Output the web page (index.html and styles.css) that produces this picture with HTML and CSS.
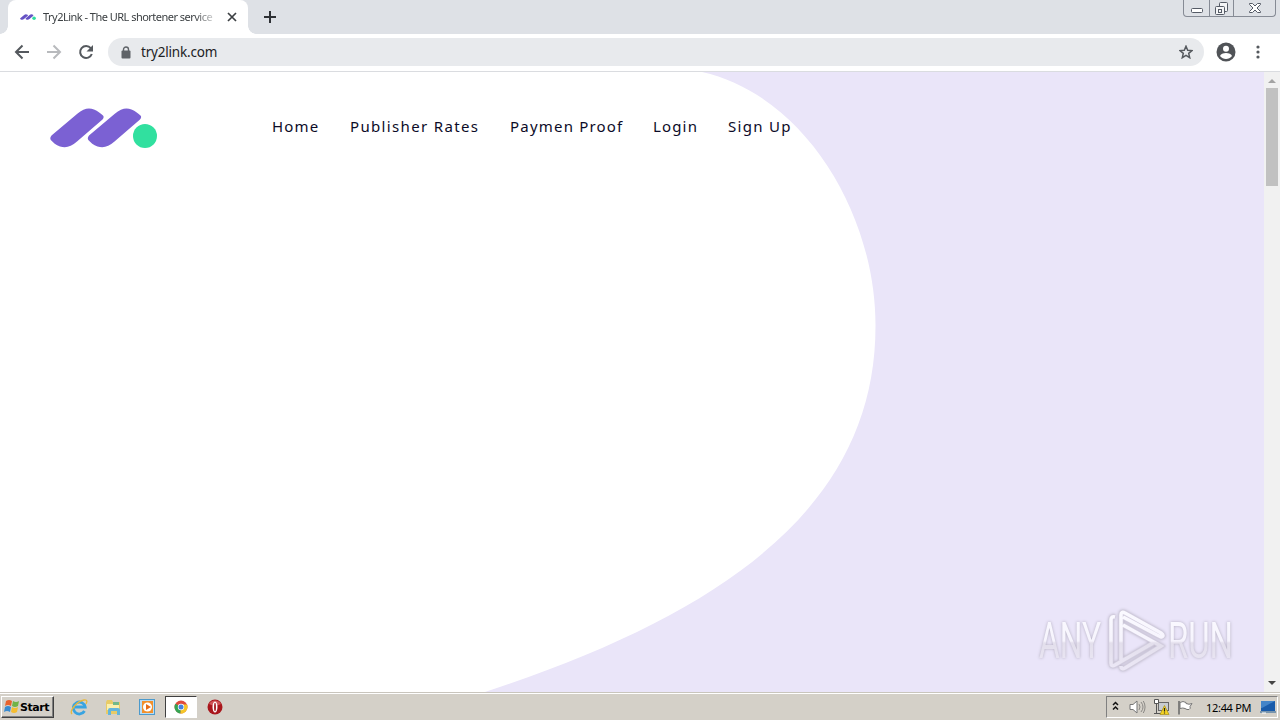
FILE: index.html
```html
<!DOCTYPE html>
<html lang="en">
<head>
  <meta charset="UTF-8">
  <title>Try2Link - The URL shortener service</title>
  <link rel="stylesheet" href="styles.css">
</head>
<body>

  <!-- Tab strip -->
  <div class="tabs">
    <div class="tab">
      <svg class="favicon" width="16" height="8" viewBox="0 0 108 40">
        <path fill="#6552c4" d="M2 29 28 6Q39-4 51 5q5 4 0 9L27 34Q16 43 3 35q-4-3-1-6z"/>
        <path fill="#6552c4" d="M39 29 65 6Q76-4 88 5q5 4 0 9L64 34Q53 43 40 35q-4-3-1-6z"/>
        <circle fill="#2fdca0" cx="95" cy="28" r="12"/>
      </svg>
      <span class="tab-title">Try2Link - The URL shortener service</span>
      <svg class="tab-close" width="10" height="10" viewBox="0 0 10 10"><path d="M1 1l8 8M9 1L1 9" stroke="#3c4043" stroke-width="1.7"/></svg>
    </div>
    <svg class="new-tab" width="12" height="12" viewBox="0 0 12 12"><path d="M6 0v12M0 6h12" stroke="#2e3135" stroke-width="2"/></svg>
    <div class="window-buttons">
      <span class="win-min"><svg width="12" height="5" viewBox="0 0 12 5"><rect x=".5" y=".5" width="11" height="4" rx="1" fill="#fff" stroke="#555b66"/></svg></span>
      <span class="win-restore"><svg width="14" height="14" viewBox="0 0 14 14" fill="#f4f5f7" stroke="#555b66"><rect x="4.500" y=".5" width="8" height="9" rx="1"/><rect x=".5" y="4.500" width="9" height="8" rx="1"/><rect x="3.500" y="7.500" width="3" height="3"/></svg></span>
      <span class="win-close"><svg width="12" height="10" viewBox="0 0 12 10"><path d="M.5.5h3L6 3 8.500.5h3v1L8 5l3.500 3.500v1h-3L6 7 3.500 9.500h-3v-1L4 5 .5 1.500z" fill="#fff" stroke="#555b66"/></svg></span>
    </div>
  </div>

  <!-- Toolbar -->
  <div class="toolbar">
    <svg class="nav-icon" width="16" height="16" viewBox="0 0 16 16"><path d="M15 8H2M8.500 1.500L2 8l6.500 6.500" fill="none" stroke="#55595e" stroke-width="2"/></svg>
    <svg class="nav-icon" width="16" height="16" viewBox="0 0 16 16"><path d="M1 8h13M7.500 1.500L14 8l-6.500 6.500" fill="none" stroke="#b8babd" stroke-width="2"/></svg>
    <svg class="nav-icon" width="16" height="16" viewBox="0 0 16 16"><path d="M12.800 4.200A6 6 0 1 0 13.800 10" fill="none" stroke="#55595e" stroke-width="2"/><path d="M15 1v6.500H8.500z" fill="#55595e"/></svg>
    <div class="address">
      <svg width="10" height="13" viewBox="0 0 10 13"><path d="M2.500 6V3.500a2.500 2.500 0 0 1 5 0V6" fill="none" stroke="#5f6368" stroke-width="1.400"/><rect x=".5" y="4.500" width="9" height="8" rx="1" fill="#5f6368"/></svg>
      <span class="url">try2link.com</span>
      <svg class="star" width="14" height="14" viewBox="0 0 14 14"><path d="M7 1.200l1.700 4 4.300.4-3.300 2.800 1 4.300L7 10.400l-3.700 2.300 1-4.300L1 5.600l4.300-.4z" fill="none" stroke="#55595e" stroke-width="1.500"/></svg>
    </div>
    <svg class="avatar" width="20" height="20" viewBox="0 0 20 20"><circle cx="10" cy="10" r="9.500" fill="#505357"/><circle cx="10" cy="6.700" r="3" fill="#fff"/><path d="M4 14c1-4 11-4 12 0-3 4-9 4-12 0z" fill="#fff"/></svg>
    <svg class="more" width="4" height="14" viewBox="0 0 4 14" fill="#55595e"><circle cx="2" cy="2" r="1.600"/><circle cx="2" cy="7" r="1.600"/><circle cx="2" cy="12" r="1.600"/></svg>
  </div>

  <!-- Page -->
  <div class="viewport">
    <main class="page">
      <svg class="shape" width="1264" height="620" viewBox="0 72 1264 620">
        <path fill="#fff" d="M0 72H702C805 95 876 215 875.500 326C875.500 500 735 610 485 692H0z"/>
      </svg>
      <header class="site-header">
        <svg class="logo" width="108" height="41" viewBox="0 0 108 41">
          <path fill="#7b61d3" d="M1.500 27.500L27 6C34 0 39-.5 44 1.500 48 3 50 5 53 7.500q1.500 1.500-.5 4L27 33.500C21 39 16 40 10 38.500 6 37 3 34.500.8 32q-1.300-2 .7-4.500z"/>
          <path fill="#7b61d3" transform="translate(37.5)" d="M1.500 27.500L27 6C34 0 39-.5 44 1.500 48 3 50 5 53 7.500q1.500 1.500-.5 4L27 33.500C21 39 16 40 10 38.500 6 37 3 34.500.8 32q-1.300-2 .7-4.500z"/>
          <circle fill="#31e09f" cx="95" cy="28" r="12"/>
        </svg>
        <nav class="menu">
          <a class="menu-home">Home</a>
          <a class="menu-rates">Publisher Rates</a>
          <a class="menu-proof">Paymen Proof</a>
          <a class="menu-login">Login</a>
          <a class="menu-signup">Sign Up</a>
        </nav>
      </header>
      <svg class="watermark" width="204" height="70" viewBox="0 0 204 70">
        <defs>
          <linearGradient id="fade" gradientUnits="userSpaceOnUse" x1="0" y1="10" x2="0" y2="60">
            <stop offset="0" stop-color="#faf9ff"/>
            <stop offset=".48" stop-color="#f6f4fd"/>
            <stop offset=".52" stop-color="#e3dfec"/>
            <stop offset="1" stop-color="#ebe7f5"/>
          </linearGradient>
        </defs>
        <g class="watermark-text" fill="url(#fade)">
          <text x="3" y="51" textLength="62" lengthAdjust="spacingAndGlyphs">ANY</text>
          <text x="132" y="51" textLength="65" lengthAdjust="spacingAndGlyphs">RUN</text>
        </g>
        <path class="watermark-edge" d="M79 10q-4-1-4 3v43q0 4 4 2l38-22M85 53V8q0-4 4-2l36 20q4 3 0 4l-4-2-34-18M87 18l38 21-36 22q-4 2-4-2"/>
        <path class="watermark-play" stroke="url(#fade)" d="M79 10q-4-1-4 3v43q0 4 4 2l38-22M85 53V8q0-4 4-2l36 20q4 3 0 4l-4-2-34-18M87 18l38 21-36 22q-4 2-4-2"/>
      </svg>
    </main>
    <div class="scrollbar">
      <span class="arrow arrow-up"></span>
      <span class="thumb"></span>
      <span class="arrow arrow-down"></span>
    </div>
  </div>

  <!-- Taskbar -->
  <footer class="taskbar">
    <div class="start">
      <svg width="17" height="16" viewBox="0 0 17 16"><path fill="#e8622c" d="M3 2q3-2 6 0L8 7Q5 5 2 7z"/><path fill="#72b347" d="M10 2q3 2 6 0l-1 5q-3 2-6 0z"/><path fill="#398bd0" d="M2 8q3-2 6 0l-1 5q-3-2-6 0z"/><path fill="#f5bd30" d="M9 8q3 2 6 0l-1 5q-3 2-6 0z"/></svg>
      <b>Start</b>
    </div>
    <div class="quick">
      <svg width="18" height="18" viewBox="0 0 18 18"><path d="M14.500 13a6 6 0 1 1 .7-4H5" fill="none" stroke="#39a4e1" stroke-width="2.800"/><path d="M2 16C-1 13 7 3 14 2c4-.5 3 2 2 4" fill="none" stroke="#e7b83d" stroke-width="1.300"/></svg>
    </div>
    <div class="quick">
      <svg width="17" height="17" viewBox="0 0 17 17"><path d="M1 3l1-2h5l1 2h7v12H1z" fill="#e8cb67"/><path d="M2 5h12v6H2z" fill="#fbf0ad"/><path d="M8 3h6v3H8z" fill="#72b989"/><path d="M3 16v-5q0-2 2-2h8q2 0 2 2v5h-3v-4H6v4z" fill="#63b5dc"/></svg>
    </div>
    <div class="quick">
      <svg width="16" height="16" viewBox="0 0 16 16"><rect x=".5" y=".5" width="15" height="15" fill="#b8dcf4" stroke="#4c9acc"/><rect x="3" y="2" width="11" height="12" fill="#f2902b"/><circle cx="8.500" cy="8" r="4.500" fill="#fff"/><path d="M7 5l5 3-5 3z" fill="#e76d18"/></svg>
    </div>
    <div class="quick active">
      <svg width="14" height="14" viewBox="0 0 14 14"><circle cx="7" cy="7" r="6.500" fill="#e04b3d"/><path d="M7 7L1.400 3.700A6.500 6.500 0 0 0 6.500 13.500z" fill="#35a553"/><path d="M7 7L6.500 13.500A6.500 6.500 0 0 0 13 4.500H7z" fill="#f5c628"/><circle cx="7" cy="7" r="3.200" fill="#fff"/><circle cx="7" cy="7" r="2.500" fill="#4581df"/></svg>
    </div>
    <div class="quick">
      <svg width="16" height="16" viewBox="0 0 16 16"><circle cx="8" cy="8" r="7.500" fill="#a9161c"/><path d="M2 5a7 7 0 0 1 12 0q-6 3-12 0z" fill="#d05558"/><ellipse cx="8" cy="8" rx="2.500" ry="5.500" fill="#fff"/><ellipse cx="8" cy="8" rx="1" ry="4.300" fill="#a9282d"/></svg>
    </div>
    <div class="tray">
      <svg class="chevrons" width="7" height="10" viewBox="0 0 7 10"><path d="M1 4l2.500-2.500L6 4M1 8.500L3.500 6 6 8.500" fill="none" stroke="#111" stroke-width="1.500"/></svg>
      <svg class="speaker" width="17" height="16" viewBox="0 0 17 16"><path d="M1 5.500h3L8 2v12l-4-3.500H1z" fill="#fff" stroke="#777"/><path d="M10 5q2 3 0 6M12 3q4 5 0 10M14.300 2q3.500 6 0 12" fill="none" stroke="#8b8986"/></svg>
      <svg class="network" width="17" height="16" viewBox="0 0 17 16"><rect x="5.500" y="3.500" width="10" height="8" fill="#c8ccd0" stroke="#666"/><path d="M3.500 5v9M1 14.500h7" fill="none" stroke="#555"/><path d="M1.500.5v4h4v-4z" fill="#fff" stroke="#555"/><path d="M11.500 6.500l4.500 9H7z" fill="#f4d322" stroke="#a88f19" stroke-width=".7"/><path d="M11.500 9v3.500M11.500 13.500v1" stroke="#222" stroke-width="1.200"/></svg>
      <svg class="flag" width="17" height="15" viewBox="0 0 17 15"><path d="M2 1v13.500" stroke="#666" stroke-width="1.500"/><path d="M3 2.500q3-2 6 0v1q3 1.500 6 0l-2 3q1 2-1 3-2 .5-4-1-2-1-5 0z" fill="#fff" stroke="#777"/></svg>
      <span class="clock">12:44 PM</span>
      <svg class="desktop" width="16" height="14" viewBox="0 0 16 14"><path d="M1 1h14v10H1z" fill="#195baa"/><path d="M1 1h14L2 8H1z" fill="#4384c8"/><path d="M0 12h16" stroke="#7995ad" stroke-width="2"/><path d="M2 13h4" stroke="#fff"/></svg>
    </div>
  </footer>

</body>
</html>
```
FILE: styles.css
```css
* {
  box-sizing: border-box;
}

body {
  margin: 0;
  width: 1280px;
  height: 720px;
  overflow: hidden;
  display: flex;
  flex-direction: column;
  background: #fff;
  font-family: "Noto Sans", "DejaVu Sans", sans-serif;
}

svg {
  display: block;
  flex: none;
}

.tabs {
  height: 34px;
  display: flex;
  align-items: flex-start;
  padding-left: 8px;
  background: #dee1e6;
}

.tab {
  position: relative;
  width: 240px;
  height: 34px;
  display: flex;
  align-items: center;
  padding-left: 12px;
  border-radius: 8px 8px 0 0;
  background: #fff;
}

/* curved feet of the tab */
.tab::before,
.tab::after {
  content: "";
  position: absolute;
  bottom: 0;
  width: 8px;
  height: 8px;
}

.tab::before {
  left: -8px;
  background: radial-gradient(circle at 0 0, #dee1e6 7.5px, #fff 8px);
}

.tab::after {
  right: -8px;
  background: radial-gradient(circle at 100% 0, #dee1e6 7.5px, #fff 8px);
}

.tab-title {
  width: 176px;
  margin-left: 7px;
  overflow: hidden;
  white-space: nowrap;
  font-size: 11px;
  line-height: 16px;
  letter-spacing: -0.52px;
  color: #3c4043;
  -webkit-mask-image: linear-gradient(to right, #000 86%, transparent);
  mask-image: linear-gradient(to right, #000 86%, transparent);
}

.tab-close {
  margin-left: 8px;
}

.new-tab {
  margin: 11px 0 0 16px;
}

.window-buttons {
  display: flex;
  width: 93px;
  height: 17px;
  margin: 0 4px 0 auto;
  border: 1px solid #868b95;
  border-top: 0;
  border-radius: 0 0 4px 4px;
}

.window-buttons span {
  display: flex;
  justify-content: center;
}

.win-min {
  width: 25px;
  padding-top: 8px;
}

.win-restore {
  width: 25px;
  padding-top: 2px;
  border-left: 1px solid #868b95;
  border-right: 1px solid #868b95;
}

.win-close {
  width: 41px;
  padding-top: 3px;
}

.toolbar {
  height: 38px;
  display: flex;
  align-items: center;
  padding: 0 0 1px 14px;
  border-bottom: 1px solid #dadce0;
  background: #fff;
}

.nav-icon {
  margin-right: 16px;
}

.address {
  width: 1096px;
  height: 28px;
  margin-left: -2px;
  display: flex;
  align-items: center;
  padding: 0 11px 0 13px;
  border-radius: 14px;
  background: #e8eaed;
}

.url {
  margin-left: 10px;
  font-size: 13.5px;
  letter-spacing: -0.2px;
  line-height: 20px;
  color: #202124;
}

.star {
  margin-left: auto;
}

.avatar {
  margin-left: 12px;
}

.more {
  margin-left: 20px;
}

.viewport {
  height: 620px;
  display: flex;
}

.page {
  position: relative;
  width: 1264px;
  height: 620px;
  overflow: hidden;
  background: #eae5f9;
}

.shape {
  position: absolute;
  left: 0;
  top: 0;
}

.site-header {
  position: relative;
  display: flex;
  padding: 36px 0 0 50px;
}

.menu {
  display: flex;
  gap: 30px;
  margin-left: 114px;
  padding-top: 6px;
  font-family: "Noto Sans", sans-serif;
  font-size: 15px;
  line-height: 24px;
  color: #0c0b28;
  white-space: nowrap;
}

.menu-home {
  width: 48px;
  letter-spacing: 1.2px;
}

.menu-rates {
  width: 130px;
  letter-spacing: 1.35px;
}

.menu-proof {
  width: 113px;
  letter-spacing: 1.2px;
}

.menu-login {
  width: 45px;
  letter-spacing: 1.15px;
}

.menu-signup {
  width: 64px;
  letter-spacing: 1.3px;
}

.watermark {
  position: absolute;
  right: 24px;
  bottom: 15px;
  filter: drop-shadow(0 0 1.5px #b3aebf);
}

.watermark-text {
  font-family: Roboto, sans-serif;
  font-size: 50px;
}

.watermark-edge {
  fill: none;
  stroke: #d3cedf;
  stroke-width: 5px;
}

.watermark-play {
  fill: none;
  stroke-width: 3.5px;
}

.scrollbar {
  width: 16px;
  height: 620px;
  display: flex;
  flex-direction: column;
  align-items: center;
  background: #f1f1f1;
}

.arrow {
  border-left: 4px solid transparent;
  border-right: 4px solid transparent;
}

.arrow-up {
  margin-top: 7px;
  border-bottom: 4px solid #a3a3a3;
}

.thumb {
  width: 12px;
  height: 98px;
  margin-top: 5px;
  background: #c1c1c1;
}

.arrow-down {
  margin: auto 0 7px;
  border-top: 4px solid #454545;
}

.taskbar {
  height: 28px;
  display: flex;
  align-items: center;
  padding: 1px 2px 0 1px;
  border-top: 1px solid #c9c5bd;
  box-shadow: inset 0 1px #fff;
  background: #d4d0c8;
}

.start {
  width: 53px;
  height: 22px;
  margin-right: 9px;
  display: flex;
  align-items: center;
  padding-left: 1px;
  border: 1px solid;
  border-color: #fff #404040 #404040 #fff;
  box-shadow: inset -1px -1px #808080;
}

.start b {
  font-family: "DejaVu Sans", sans-serif;
  font-size: 11px;
  letter-spacing: -0.45px;
}

.quick {
  width: 32px;
  height: 22px;
  margin-right: 2px;
  display: flex;
  align-items: center;
  justify-content: center;
}

.active {
  border: 1px solid;
  border-color: #404040 #fff #fff #404040;
  background: #fff;
}

.tray {
  width: 172px;
  height: 22px;
  margin-left: auto;
  display: flex;
  align-items: center;
  padding-left: 5px;
  border: 1px solid;
  border-color: #808080 #fff #fff #808080;
}

.chevrons {
  margin-bottom: 2px;
}

.speaker {
  margin-left: 10px;
}

.network {
  margin-left: 7px;
}

.flag {
  margin-left: 7px;
}

.clock {
  width: 46px;
  margin-left: 12px;
  font-size: 11px;
  letter-spacing: -0.3px;
  white-space: nowrap;
  color: #000;
}

.desktop {
  margin-left: 8px;
}
```
